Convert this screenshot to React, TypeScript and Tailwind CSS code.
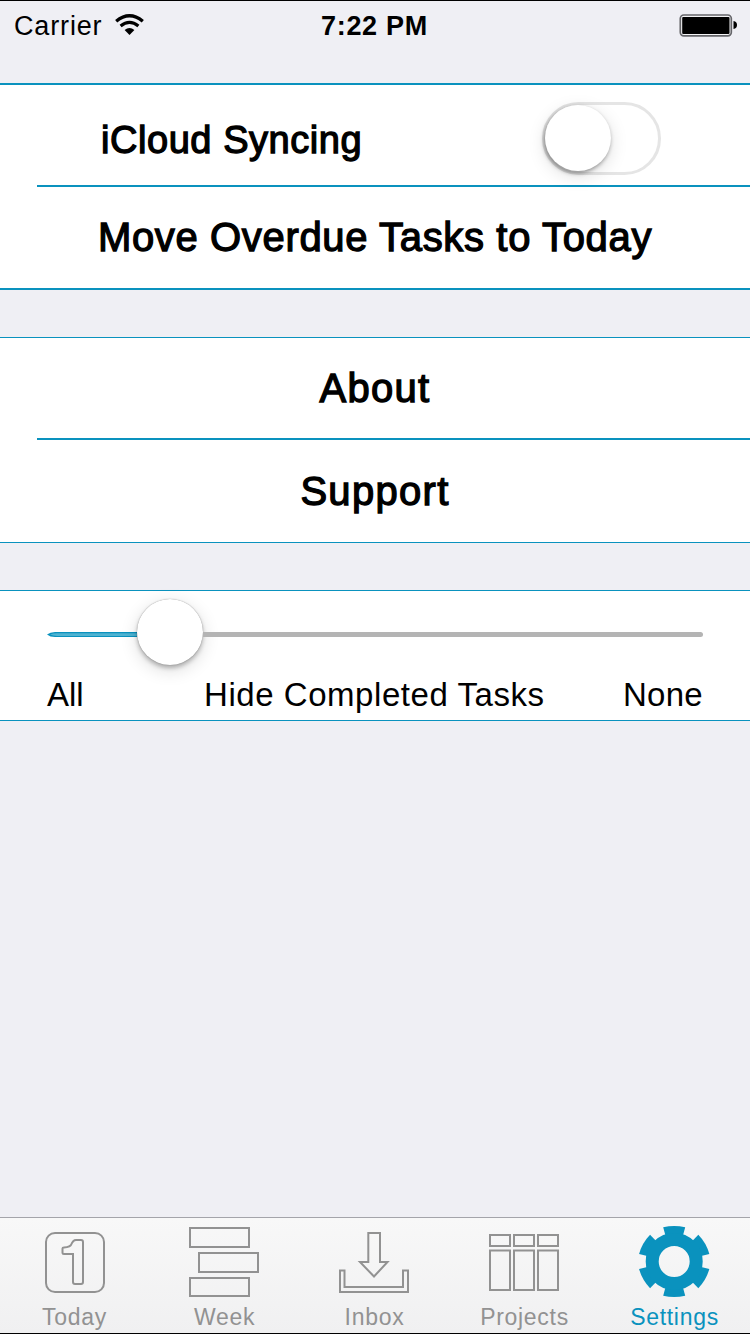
import type { ReactNode } from "react";

const GRAY = "#929292";
const BLUE = "#0a92be";

function StatusBar() {
  return (
    <header className="flex h-[82px] items-start justify-between pl-[14px] pr-[12px] text-[27px] leading-[30px]">
      <div className="flex w-[307px] pt-[10px]">
        <span className="w-[88px] tracking-[0.85px]">Carrier</span>
        <svg className="ml-[13px] mt-[3px]" width="30" height="22" viewBox="0 0 30 22" fill="none" stroke="#000">
          <path d="M1.2 7.2 Q14.5 -3.6 27.8 7.2" strokeWidth="3.4" />
          <path d="M5.6 12 Q14.5 4.8 23.4 12" strokeWidth="3.2" />
          <path d="M9.6 16 Q14.5 12 19.4 16 L14.5 21Z" fill="#000" stroke="none" />
        </svg>
      </div>
      <span className="flex-1 pt-[10px] font-bold tracking-[0.7px]">7:22 PM</span>
      <svg className="mt-[12px]" width="59" height="24" viewBox="0 0 59 24">
        <rect x="1.3" y="2" width="51" height="20.8" rx="3.5" fill="#f4f4f6" stroke="#66666a" strokeWidth="1.7" />
        <rect x="3.2" y="4" width="47.3" height="17" rx="1" />
        <path d="M54.5 8 Q58 8.5 58 12 Q58 15.5 54.5 16Z" />
      </svg>
    </header>
  );
}

function Tab({ label, active, children }: { label: string; active?: boolean; children: ReactNode }) {
  return (
    <button className={`flex h-full w-[150px] flex-col items-center ${active ? "text-[#0a92be]" : "text-[#929292]"}`}>
      <svg width="90" height="80" viewBox="0 0 90 80" fill="none" stroke={GRAY} strokeWidth="2">
        {children}
      </svg>
      <span className="mt-[5px] mr-[1px] text-[23px] leading-[28px] tracking-[0.7px]">{label}</span>
    </button>
  );
}

export default function App() {
  return (
    <div className="flex h-[1334px] w-[750px] flex-col overflow-hidden border-y border-black bg-[#efeff4] font-['Liberation_Sans',Arial,sans-serif] text-black">
      <StatusBar />

      <section className="h-[207px] border-y-2 border-[#0a92be] bg-white text-[40px] [-webkit-text-stroke:1.3px_black]">
        <div className="flex h-[100px] items-center justify-between pl-[101px] pr-[89px]">
          <span className="mt-[10px] text-[38px] tracking-[0.55px]">iCloud Syncing</span>
          <div className="mt-[7px] flex h-[73px] w-[119px] rounded-full border-[3px] border-[#e5e5e5]">
            <div className="h-[66px] w-[66px] rounded-full bg-white shadow-[0_5px_18px_rgba(0,0,0,0.13),-1px_2px_4px_rgba(0,0,0,0.4)]" />
          </div>
        </div>
        <div className="ml-[37px] h-[2px] bg-[#0a92be]" />
        <div className="flex h-[100px] items-center justify-center">
          <span className="tracking-[0.65px]">Move Overdue Tasks to Today</span>
        </div>
      </section>

      <section className="mt-[47px] h-[206px] border-y border-[#0a92be] bg-white text-[40px] [-webkit-text-stroke:1.3px_black]">
        <div className="flex h-[99px] items-center justify-center">
          <span className="tracking-[1.3px]">About</span>
        </div>
        <div className="ml-[37px] mt-px h-[2px] bg-[#0a92be]" />
        <div className="flex h-[101px] items-center justify-center">
          <span className="tracking-[1.3px]">Support</span>
        </div>
      </section>

      <section className="mt-[47px] h-[131px] border-y border-[#0a92be] bg-white px-[47px]">
        <div className="flex h-[81px] items-center">
          <svg className="mt-[6px]" width="90" height="5" viewBox="0 0 90 5">
            <path d="M0 2.5 Q3 0 8 0 H90 V5 H8 Q3 5 0 2.5Z" fill={BLUE} />
            <path d="M3 2.5 Q6 1.2 10 1.2 H90 V4 H10 Q6 3.8 3 2.5Z" fill="#4fb3d2" />
          </svg>
          <div className="h-[66px] w-[66px] shrink-0 rounded-full bg-white shadow-[0_0_1px_rgba(0,0,0,0.45),0_5px_18px_rgba(0,0,0,0.14),0_3px_4px_rgba(0,0,0,0.25)]" />
          <div className="mt-[6px] h-[5px] flex-1 rounded-r-full bg-[#b4b4b4]" />
        </div>
        <div className="flex h-[46px] items-center text-[33px]">
          <span className="w-[157px]">All</span>
          <span className="flex-1 tracking-[0.55px]">Hide Completed Tasks</span>
          <span className="tracking-[0.3px]">None</span>
        </div>
      </section>

      <div className="flex-1" />

      <nav className="flex h-[116px] border-t border-[#a4a4aa] bg-linear-to-b from-[#f8f8f8] to-[#f0f0f1]">
        <Tab label="Today">
          <rect x="16" y="15" width="58" height="59" rx="9" />
          <path d="M43.5 23 Q44.5 22 46 22 H51 Q53 22 53 24 V64 Q53 66 51 66 H45 Q43 66 43 64 V36 H34 Q32.5 36 32.5 34.5 V30.5 Q32.5 29.5 34 29.5 C39 29.5 41 28 42 25Z" />
        </Tab>
        <Tab label="Week">
          <rect x="10" y="10" width="59" height="19" />
          <rect x="19" y="35" width="59" height="19" />
          <rect x="10" y="60" width="59" height="18" />
        </Tab>
        <Tab label="Inbox">
          <path d="M38.3 15 H50 V44 H57.5 L44 58.5 L30 44 H38.3Z" />
          <path d="M10 52.5 H14.5 V69 H73 V52.5 H78 V74 H10Z" />
        </Tab>
        <Tab label="Projects">
          <path d="M10 17 H30 V28 H10Z M34 17 H54 V28 H34Z M58 17 H78 V28 H58Z M10 32.5 H30 V72 H10Z M34 32.5 H54 V72 H34Z M58 32.5 H78 V72 H58Z" />
        </Tab>
        <Tab label="Settings" active>
          <g transform="translate(44.2 43.5)" fill={BLUE} stroke="none">
            {[0, 60, 120, 180, 240, 300].map((a) => (
              <path key={a} transform={`rotate(${a})`} d="M-8.5 -25 L-11 -34.2 Q0 -37 11 -34.2 L8.5 -25Z" />
            ))}
            <circle r="22" fill="none" stroke={BLUE} strokeWidth="13" />
          </g>
        </Tab>
      </nav>
    </div>
  );
}
